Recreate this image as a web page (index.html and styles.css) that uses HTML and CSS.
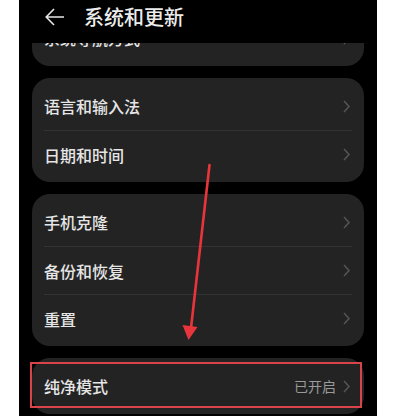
FILE: index.html
```html
<!DOCTYPE html>
<html lang="zh">
<head>
<meta charset="utf-8">
<link rel="stylesheet" href="styles.css">
</head>
<body>
<div class="screen">
  <header class="header">
    <svg class="back" width="20" height="18" viewBox="0 0 20 18"><path d="M19 9H2M9 1L1.2 9L9 17" fill="none" stroke="#e6e6e6" stroke-width="1.6"/></svg>
    <h1 class="title">系统和更新</h1>
  </header>
  <div class="list">
    <section class="card first">
      <div class="row"><span class="label">系统导航方式</span><svg class="chev" width="7" height="13" viewBox="0 0 7 13"><polyline points="1,1 6,6.5 1,12" fill="none" stroke="#555" stroke-width="1.5"/></svg></div>
    </section>
    <section class="card">
      <div class="row"><span class="label">语言和输入法</span><svg class="chev" width="7" height="13" viewBox="0 0 7 13"><polyline points="1,1 6,6.5 1,12" fill="none" stroke="#555" stroke-width="1.5"/></svg></div>
      <div class="row"><span class="label">日期和时间</span><svg class="chev" width="7" height="13" viewBox="0 0 7 13"><polyline points="1,1 6,6.5 1,12" fill="none" stroke="#555" stroke-width="1.5"/></svg></div>
    </section>
    <section class="card">
      <div class="row"><span class="label">手机克隆</span><svg class="chev" width="7" height="13" viewBox="0 0 7 13"><polyline points="1,1 6,6.5 1,12" fill="none" stroke="#555" stroke-width="1.5"/></svg></div>
      <div class="row"><span class="label">备份和恢复</span><svg class="chev" width="7" height="13" viewBox="0 0 7 13"><polyline points="1,1 6,6.5 1,12" fill="none" stroke="#555" stroke-width="1.5"/></svg></div>
      <div class="row"><span class="label">重置</span><svg class="chev" width="7" height="13" viewBox="0 0 7 13"><polyline points="1,1 6,6.5 1,12" fill="none" stroke="#555" stroke-width="1.5"/></svg></div>
    </section>
    <section class="card">
      <div class="row"><span class="label">纯净模式</span><span class="value">已开启</span><svg class="chev" width="7" height="13" viewBox="0 0 7 13"><polyline points="1,1 6,6.5 1,12" fill="none" stroke="#555" stroke-width="1.5"/></svg></div>
    </section>
  </div>
  <div class="highlight"></div>
  <svg class="arrow" width="358" height="416" viewBox="0 0 358 416">
    <line x1="190.5" y1="165" x2="172" y2="328" stroke="#e8353b" stroke-width="2.6" stroke-linecap="round"/>
    <polygon points="163.5,325 178.5,327 169.5,340" fill="#e8353b"/>
  </svg>
</div>
</body>
</html>
```

FILE: styles.css
```css
html, body {
  margin: 0;
  padding: 0;
  background: #ffffff;
}

body {
  font-family: "Noto Sans CJK SC", "Noto Sans", sans-serif;
}

.screen {
  position: relative;
  margin-left: 19px;
  width: 358px;
  height: 416px;
  background: #000;
  overflow: hidden;
  display: flex;
  flex-direction: column;
}

.header {
  flex: none;
  height: 43px;
  display: flex;
  align-items: flex-start;
  padding-top: 5px;
  box-sizing: border-box;
  background: #000;
  position: relative;
  z-index: 1;
}

.back {
  margin: 3px 0 0 26px;
}

.title {
  margin: 0 0 0 19px;
  font-size: 20px;
  line-height: 24px;
  font-weight: 500;
  color: #ececec;
}

.list {
  flex: 1;
  overflow: hidden;
  display: flex;
  flex-direction: column;
  gap: 12px;
}

.card {
  flex: none;
  margin: 0 13px;
  background: #232323;
  border-radius: 18px;
  padding: 4px 0;
}

.card.first {
  margin-top: -33px;
}

.row {
  height: 48px;
  margin: 0 12px;
  display: flex;
  align-items: center;
  box-sizing: border-box;
}

.row + .row {
  border-top: 1px solid #333333;
}

.label {
  flex: 1;
  font-size: 16px;
  font-weight: 500;
  color: #e6e6e6;
}

.value {
  font-size: 14px;
  color: #9a9a9a;
  margin-right: 7px;
}

.chev {
  margin-right: 2px;
}

.highlight {
  position: absolute;
  left: 11px;
  top: 362px;
  width: 332px;
  height: 46px;
  box-sizing: border-box;
  border: 2px solid #d8444a;
}

.arrow {
  position: absolute;
  left: 0;
  top: 0;
  pointer-events: none;
}
```
